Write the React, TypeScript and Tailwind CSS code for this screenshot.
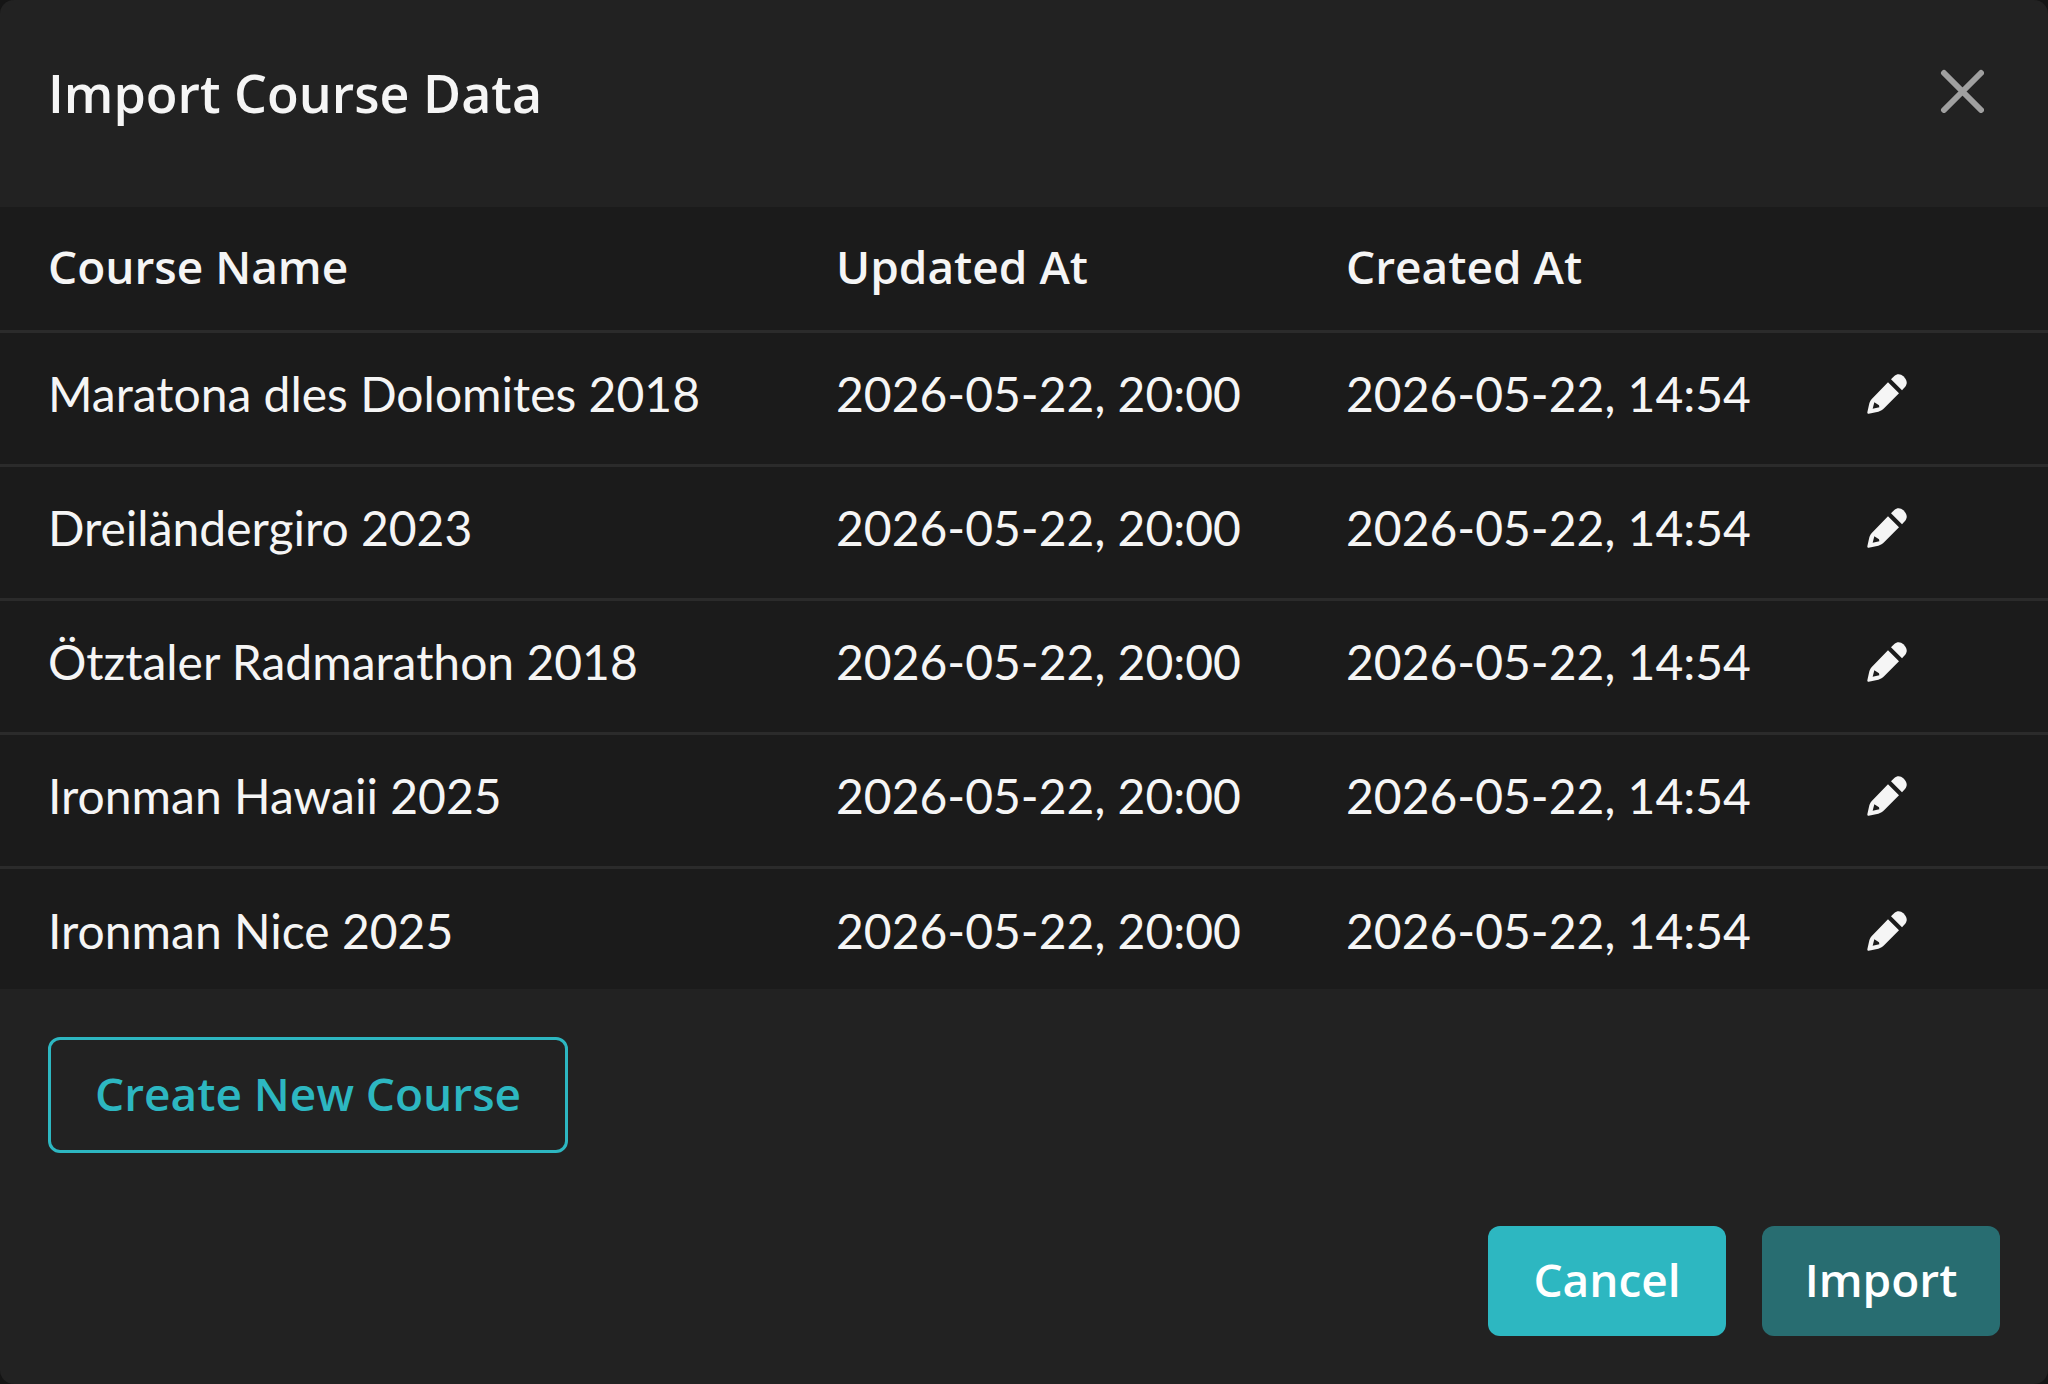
import React from 'react';

const courses = [
    { name: 'Maratona dles Dolomites 2018', updatedAt: '2026-05-22, 20:00', createdAt: '2026-05-22, 14:54' },
    { name: 'Dreiländergiro 2023', updatedAt: '2026-05-22, 20:00', createdAt: '2026-05-22, 14:54' },
    { name: 'Ötztaler Radmarathon 2018', updatedAt: '2026-05-22, 20:00', createdAt: '2026-05-22, 14:54' },
    { name: 'Ironman Hawaii 2025', updatedAt: '2026-05-22, 20:00', createdAt: '2026-05-22, 14:54' },
    { name: 'Ironman Nice 2025', updatedAt: '2026-05-22, 20:00', createdAt: '2026-05-22, 14:54' },
];

const PencilIcon: React.FC = () => (
    <svg viewBox="0 0 120 120" className="size-10" fill="currentColor" aria-hidden="true">
        <path
            fillRule="evenodd"
            d="M63 25 L96 58 L52 102 C47 108 41 111 34 113 L5 119 Q0 120 1 115 L6 92 C8 85 9 80 15 74 Z M22 85 L17 104 L37 100 L36 94 Z"
        />
        <path d="M72 16 L82 6 C90 -1 101 -1 109 7 L113 11 C121 20 121 31 114 39 L105 49 Z" />
    </svg>
);

const CloseIcon: React.FC = () => (
    <svg viewBox="0 0 44 44" className="size-11" fill="none" stroke="currentColor" strokeWidth="6" strokeLinecap="round" aria-hidden="true">
        <path d="M4 4 L41 41 M41 4 L4 41" />
    </svg>
);

export default function App() {
    return (
        <div className="min-h-screen bg-[#151515] font-['Lato',sans-serif] text-5xl text-[#f5f5f5]">
            <div role="dialog" aria-labelledby="dialog-title" className="flex min-h-screen flex-col rounded-[14px] bg-[#222222]">
                <header className="flex items-start justify-between px-12 pt-[61px] pb-[82px]">
                    <h1 id="dialog-title" className="font-['Open_Sans',sans-serif] text-[52px] leading-[64px] font-semibold">Import Course Data</h1>
                    <button type="button" aria-label="Close" className="mt-2 mr-4 text-[#a0a0a0]">
                        <CloseIcon />
                    </button>
                </header>

                <div className="max-h-[782px] overflow-y-auto bg-[#1b1b1b] [scrollbar-width:none]">
                    <table className="w-full table-fixed text-left">
                        <thead className="font-['Open_Sans',sans-serif] text-[46px] leading-[58px]">
                            <tr className="h-[124px] border-b-3 border-[#2b2b2b]">
                                <th scope="col" className="pl-12 pb-1 font-semibold">Course Name</th>
                                <th scope="col" className="w-[510px] pl-12 pb-1 font-semibold">Updated At</th>
                                <th scope="col" className="w-[521px] pl-12 pb-1 font-semibold">Created At</th>
                                <td className="w-[229px]" />
                            </tr>
                        </thead>
                        <tbody>
                            {courses.map((course) => (
                                <tr key={course.name} className="h-[134px] border-b-3 border-[#2b2b2b] last:border-b-0">
                                    <td className="pl-12 pb-2">{course.name}</td>
                                    <td className="pl-12 pb-2">{course.updatedAt}</td>
                                    <td className="pl-12 pb-2">{course.createdAt}</td>
                                    <td className="pl-12 pb-2">
                                        <button type="button" aria-label={`Edit ${course.name}`} className="block">
                                            <PencilIcon />
                                        </button>
                                    </td>
                                </tr>
                            ))}
                        </tbody>
                    </table>
                </div>

                <div className="px-12 pt-12 font-['Open_Sans',sans-serif] text-[46px] leading-[50px] font-semibold">
                    <button type="button" className="rounded-xl border-3 border-[#2db7c1] px-11 pt-7 pb-8 text-[#2db7c1]">
                        Create New Course
                    </button>
                </div>

                <footer className="mt-auto flex justify-end gap-9 px-12 pb-12 font-['Open_Sans',sans-serif] text-[46px] leading-[50px] font-semibold text-white">
                    <button type="button" className="min-w-[238px] rounded-xl bg-[#2db7c1] px-10 pt-7 pb-8">
                        Cancel
                    </button>
                    <button type="button" disabled className="min-w-[238px] rounded-xl bg-[#286d71] px-10 pt-7 pb-8">
                        Import
                    </button>
                </footer>
            </div>
        </div>
    );
}
